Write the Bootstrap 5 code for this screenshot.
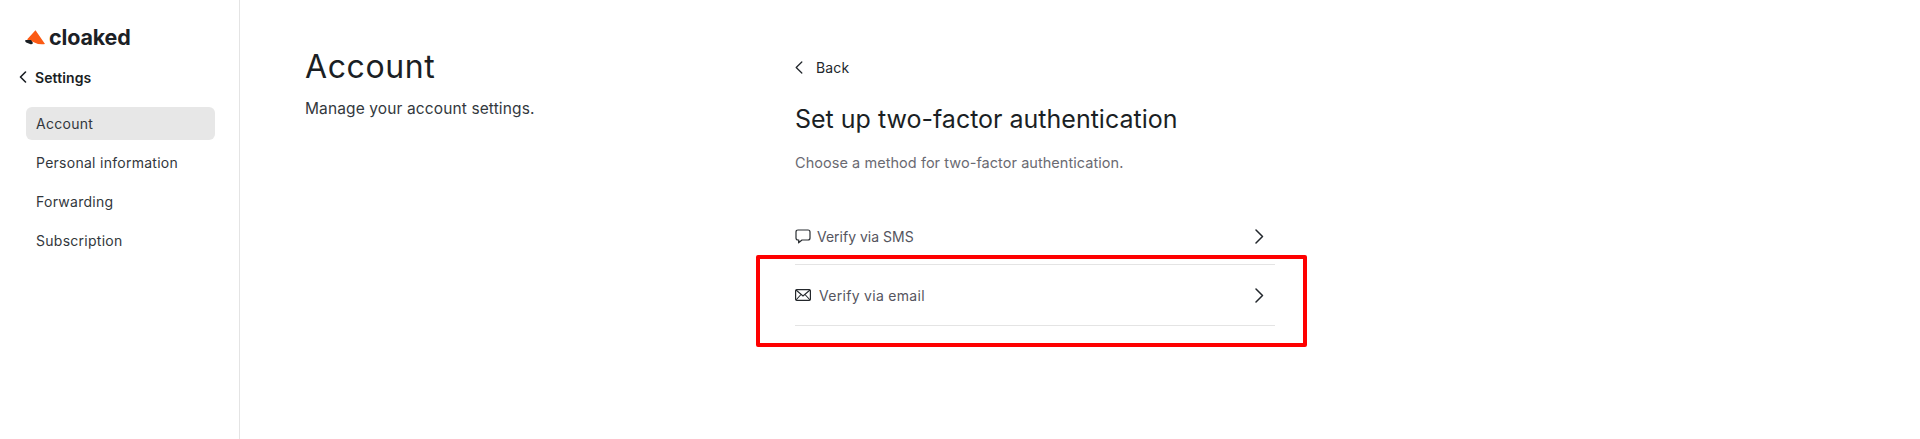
<!DOCTYPE html>
<html lang="en">
<head>
<meta charset="utf-8">
<title>Account</title>
<link href="https://cdn.jsdelivr.net/npm/bootstrap@5.3.0/dist/css/bootstrap.min.css" rel="stylesheet">
<style>
html,body{height:439px;overflow:hidden}
body{font-family:Inter,"Liberation Sans",sans-serif;color:#191e23;background:#fff;position:relative}
.app-side{width:240px;height:439px;border-right:1px solid #e4e4e4;flex:none;padding:27px 0 0 0}
.logo-row{height:20px;padding-left:25px;gap:4px}
.logo-word{font-size:21.5px;font-weight:700;line-height:20px;letter-spacing:-.15px;color:#1c2126}
.back-row{margin-top:18px;height:24px;padding-left:19px;gap:8px;font-size:14px;font-weight:600;letter-spacing:.1px}
.side-nav{margin:18px 0 0 26px;width:189px;gap:6px}
.side-link{height:33px;padding-left:10px;border-radius:6px;font-size:14px;line-height:33px;color:#32373c;text-decoration:none;display:block;letter-spacing:.27px}
.side-link.is-on{background:#e7e7e7}
.main-area{padding:46px 0 0 65px}
.col-left{width:490px;flex:none}
.acct-title{font-size:32px;font-weight:400;line-height:42px;margin:0;letter-spacing:.6px;color:#1b1f24}
.acct-sub{font-size:15.5px;line-height:24px;margin:9px 0 0;letter-spacing:.12px;color:#33383d}
.col-right{width:480px;flex:none}
.back-link{height:20px;gap:13px;font-size:14px;color:#22272c;letter-spacing:.15px;margin-top:11px}
.setup-title{font-size:25px;font-weight:400;line-height:34px;margin:25px 0 0;letter-spacing:0;color:#1b1f24}
.setup-desc{font-size:14.5px;line-height:20px;margin:17px 0 0;color:#6a6a72;letter-spacing:.05px}
.method-list{margin-top:42px}
.method-row{height:61px;border-bottom:1px solid #e4e4e4;font-size:14px;color:#55555e;font-weight:400;padding-right:11px}
.method-row.first{height:50px;padding-bottom:6px}
.method-left{gap:6px}
.method-row.second .method-left{gap:8px;letter-spacing:.3px}
.method-row.first .method-left{letter-spacing:0}
.red-frame{position:absolute;left:756px;top:255px;width:551px;height:92px;border:4px solid #fe0000;border-radius:2px;pointer-events:none}
</style>
</head>
<body>
<div class="d-flex">
  <aside class="app-side">
    <div class="d-flex align-items-center logo-row">
      <svg width="20" height="15" viewBox="0 0 20 15" aria-hidden="true"><path d="M10.5 0.3 L20 14 Q13 15 7 11.5 L2 9.5 Z" fill="#fb5a14"/><path d="M0.3 10 L6 10 L8 13 Q7 14.8 5 14 L1.2 12.6 Q0 12 .3 10Z" fill="#191e23"/></svg>
      <span class="logo-word">cloaked</span>
    </div>
    <div class="d-flex align-items-center back-row">
      <svg width="8" height="12" viewBox="0 0 8 12" aria-hidden="true"><path d="M6.5 1 L1.5 6 L6.5 11" fill="none" stroke="#191e23" stroke-width="1.6" stroke-linecap="round" stroke-linejoin="round"/></svg>
      <span>Settings</span>
    </div>
    <nav class="d-flex flex-column side-nav">
      <a class="side-link is-on" href="#">Account</a>
      <a class="side-link" href="#">Personal information</a>
      <a class="side-link" href="#">Forwarding</a>
      <a class="side-link" href="#">Subscription</a>
    </nav>
  </aside>
  <main class="d-flex main-area">
    <section class="col-left">
      <h1 class="acct-title">Account</h1>
      <p class="acct-sub">Manage your account settings.</p>
    </section>
    <section class="col-right">
      <div class="d-flex align-items-center back-link">
        <svg width="8" height="13" viewBox="0 0 8 13" aria-hidden="true"><path d="M6.8 1 L1.2 6.5 L6.8 12" fill="none" stroke="#22272c" stroke-width="1.3" stroke-linecap="round" stroke-linejoin="round"/></svg>
        <span>Back</span>
      </div>
      <h2 class="setup-title">Set up two-factor authentication</h2>
      <p class="setup-desc">Choose a method for two-factor authentication.</p>
      <div class="method-list">
        <div class="d-flex align-items-center justify-content-between method-row first">
          <div class="d-flex align-items-center method-left">
            <svg width="16" height="15" viewBox="0 0 16 15" aria-hidden="true"><path d="M3 1 H13 Q15 1 15 3 V9 Q15 11 13 11 H7 L3.6 13.8 L3.8 11 H3 Q1 11 1 9 V3 Q1 1 3 1Z" fill="none" stroke="#2b2f33" stroke-width="1.2" stroke-linejoin="round"/></svg>
            <span>Verify via SMS</span>
          </div>
          <svg width="10" height="15" viewBox="0 0 10 15" aria-hidden="true"><path d="M2 1 L8.5 7.5 L2 14" fill="none" stroke="#22272c" stroke-width="1.5" stroke-linecap="round" stroke-linejoin="round"/></svg>
        </div>
        <div class="d-flex align-items-center justify-content-between method-row second">
          <div class="d-flex align-items-center method-left">
            <svg width="16" height="12" viewBox="0 0 16 12" aria-hidden="true"><rect x=".6" y=".6" width="14.8" height="10.8" rx="1.2" fill="none" stroke="#23272b" stroke-width="1.2"/><path d="M1 1 L8 7 L15 1 M1 11 L6 5.5 M15 11 L10 5.5" fill="none" stroke="#23272b" stroke-width="1.1"/></svg>
            <span>Verify via email</span>
          </div>
          <svg width="10" height="15" viewBox="0 0 10 15" aria-hidden="true"><path d="M2 1 L8.5 7.5 L2 14" fill="none" stroke="#22272c" stroke-width="1.5" stroke-linecap="round" stroke-linejoin="round"/></svg>
        </div>
      </div>
    </section>
  </main>
</div>
<div class="red-frame"></div>
</body>
</html>
